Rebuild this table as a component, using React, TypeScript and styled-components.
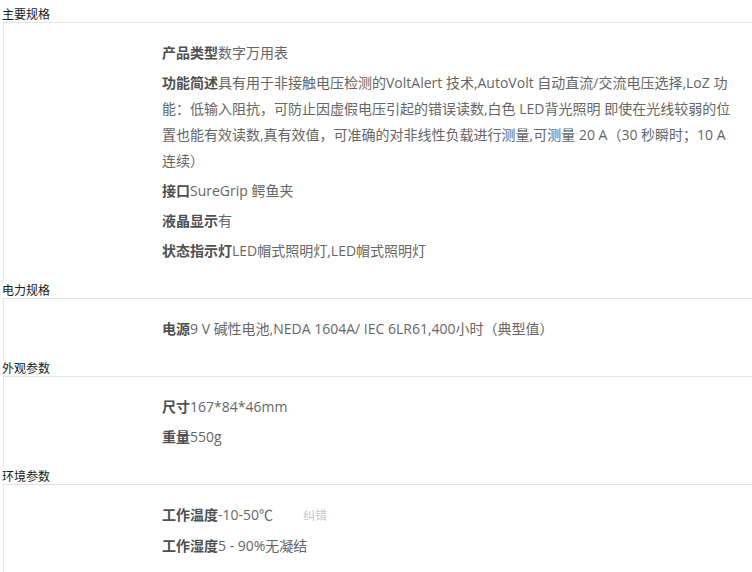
import React from "react";
import styled, { createGlobalStyle } from "styled-components";

const Global = createGlobalStyle`
  html, body { margin: 0; padding: 0; background: #fff; }
  body { font-family: "Open Sans", "Noto Sans CJK SC", sans-serif; }
`;

const Page = styled.div`
  padding-top: 6px;
  width: 752px;
`;

const SectionTitle = styled.div`
  height: 16px;
  line-height: 16px;
  padding-left: 2px;
  font-family: "Noto Sans CJK SC", sans-serif;
  font-size: 12px;
  color: #1a1a1a;
`;

const Box = styled.div`
  margin-left: 3px;
  border-top: 1px solid #e3e3e3;
  border-left: 1px solid #e8e8e8;
  padding: 17px 10px 14px 158px;
`;

const Item = styled.p`
  margin: 0 0 4px;
  font-size: 14px;
  line-height: 26px;
  color: #666;
  font-family: "Open Sans", "Noto Sans CJK SC", sans-serif;
`;

const Label = styled.b`
  font-weight: bold;
  color: #505050;
  font-family: "Open Sans", "Noto Sans CJK SC", sans-serif;
`;

const Correct = styled.span`
  margin-left: 30px;
  font-size: 12px;
  color: #c8c8c8;
  font-family: "Open Sans", "Noto Sans CJK SC", sans-serif;
`;

type Spec = { label: string; value: string; correct?: boolean };
type Section = { title: string; items: Spec[] };

const sections: Section[] = [
  {
    title: "主要规格",
    items: [
      { label: "产品类型", value: "数字万用表" },
      {
        label: "功能简述",
        value:
          "具有用于非接触电压检测的VoltAlert 技术,AutoVolt 自动直流/交流电压选择,LoZ 功能：低输入阻抗，可防止因虚假电压引起的错误读数,白色 LED背光照明 即使在光线较弱的位置也能有效读数,真有效值，可准确的对非线性负载进行测量,可测量 20 A（30 秒瞬时；10 A 连续）",
      },
      { label: "接口", value: "SureGrip 鳄鱼夹" },
      { label: "液晶显示", value: "有" },
      { label: "状态指示灯", value: "LED帽式照明灯,LED帽式照明灯" },
    ],
  },
  {
    title: "电力规格",
    items: [{ label: "电源", value: "9 V 碱性电池,NEDA 1604A/ IEC 6LR61,400小时（典型值）" }],
  },
  {
    title: "外观参数",
    items: [
      { label: "尺寸", value: "167*84*46mm" },
      { label: "重量", value: "550g" },
    ],
  },
  {
    title: "环境参数",
    items: [
      { label: "工作温度", value: "-10-50℃", correct: true },
      { label: "工作湿度", value: "5 - 90%无凝结" },
    ],
  },
];

export default function App() {
  return (
    <Page>
      <Global />
      {sections.map((s) => (
        <section key={s.title}>
          <SectionTitle>{s.title}</SectionTitle>
          <Box>
            {s.items.map((it) => (
              <Item key={it.label}>
                <Label>{it.label}</Label>
                {it.value}
                {it.correct && <Correct>纠错</Correct>}
              </Item>
            ))}
          </Box>
        </section>
      ))}
    </Page>
  );
}
